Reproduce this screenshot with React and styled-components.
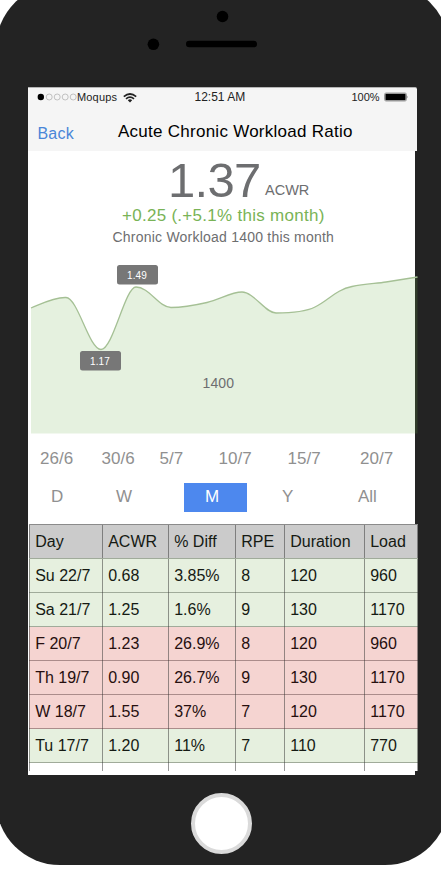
import React from "react";
import styled, { createGlobalStyle } from "styled-components";

const GlobalStyle = createGlobalStyle`
  * { box-sizing: border-box; }
  html, body { margin: 0; background: #fff; overflow: hidden; }
  body { font-family: "Liberation Sans", Arial, sans-serif; color: #6d6e70; }
`;

const Page = styled.div`
  width: 441px;
  height: 879px;
  overflow: hidden;
  background: #fff;
  display: flow-root;
`;

const Phone = styled.div`
  width: 453px;
  height: 881.5px;
  margin: -16.5px 0 0 -4px;
  border-radius: 64px;
  background: #232323;
  display: flex;
  flex-direction: column;
`;

const Bezel = styled.svg`
  display: block;
  flex: none;
  width: 453px;
  height: 103.5px;
`;

const Screen = styled.main`
  width: 387px;
  height: 688px;
  flex: none;
  margin-left: 32px;
  background: #fff;
  display: flex;
  flex-direction: column;
  align-items: flex-start;
`;

const Header = styled.header`
  width: 388.5px;
  height: 64px;
  flex: none;
  background: #f5f5f5;
  border-top: 1px solid #b5b5b5;
  border-top-right-radius: 2px;
  color: #000;
`;

const StatusBar = styled.div`
  height: 19px;
  display: grid;
  grid-template-columns: 166.5px 157px 1fr;
  align-items: center;
  line-height: 19px;
`;

const StatusGroup = styled.div`
  display: flex;
  align-items: center;
  height: 19px;
  font-size: ${(p) => p.$size}px;
  letter-spacing: ${(p) => p.$tracking || 0}px;
  color: #222;
`;

const Dots = styled.svg`
  width: 40px;
  height: 10px;
  margin: 0 0.5px 2px 8.5px;
`;

const Wifi = styled.svg`
  width: 14px;
  height: 10px;
  margin-left: 6px;
`;

const Battery = styled.svg`
  width: 24px;
  height: 10px;
  margin: 0 0 1px 4px;
`;

const NavBar = styled.nav`
  height: 44px;
  display: grid;
  grid-template-columns: 80.5px 1fr;
  padding: 3px 0 0 9.5px;
  line-height: 44px;
`;

const BackLink = styled.a`
  color: #4a86d8;
  font-size: 16px;
  letter-spacing: 0.2px;
  padding-top: 2px;
`;

const Title = styled.h1`
  margin: 0;
  font-size: 17px;
  font-weight: 400;
  letter-spacing: 0.26px;
  white-space: nowrap;
`;

const Summary = styled.section`
  height: 102px;
  flex: none;
  white-space: nowrap;
`;

const Ratio = styled.div`
  display: flex;
  height: 54px;
  padding: 3px 0 0 138.5px;
`;

const RatioValue = styled.span`
  font-size: 49px;
  line-height: 52px;
  letter-spacing: -0.7px;
  padding-left: 1.5px;
  width: 98.5px;
`;

const RatioUnit = styled.span`
  font-size: 14.5px;
  line-height: 24px;
  padding-top: 24px;
`;

const Change = styled.div`
  height: 22px;
  line-height: 22px;
  padding-left: 94px;
  font-size: 17px;
  letter-spacing: 0.28px;
  color: #79b356;
`;

const Workload = styled.div`
  height: 20px;
  line-height: 20px;
  padding-left: 84.5px;
  font-size: 14px;
  letter-spacing: 0.22px;
`;

const Chart = styled.svg`
  display: block;
  flex: none;
  width: 390px;
  height: 181px;
  font-family: "Liberation Sans", Arial, sans-serif;
`;

const AxisRow = styled.div`
  height: 22px;
  margin-top: 13px;
  flex: none;
  display: grid;
  grid-template-columns: 61.5px 58px 59px 69px 72.5px 50px;
  padding-left: 12px;
  line-height: 23px;
  font-size: 17px;
  color: #909090;
`;

const RangeTabs = styled.div`
  height: 29px;
  margin-top: 13.5px;
  flex: none;
  display: grid;
  grid-template-columns: 65px 67.5px 98.5px 76px 50px;
  padding-left: 23px;
  line-height: 27px;
  font-size: 17px;
  color: #909090;
`;

const RangeTab = styled.div`
  ${(p) =>
    p.$active &&
    `
    width: 63px;
    padding-left: 21.5px;
    background: #4d88ee;
    color: #fff;
  `}
`;

const TableClip = styled.div`
  width: 389px;
  height: 247px;
  margin: 12.5px 0 0 1px;
  flex: none;
  overflow: hidden;
`;

const Table = styled.div`
  border-top: 1px solid #8b8b8b;
  color: #151515;
  background: #fff;
`;

const tones = {
  head: "#cbcbcb",
  good: "#e6f0df",
  bad: "#f5d4d1",
  none: "#ffffff",
};

const Row = styled.div`
  display: grid;
  grid-template-columns: 74px 66px 67px 49px 80px 53px;
  height: 34px;
  line-height: ${(p) => (p.$tone === "head" ? 33 : 34)}px;
  background: ${(p) => tones[p.$tone]};
  border-bottom: 1px solid ${(p) => (p.$tone === "bad" ? "#ab8c8b" : "#a0ab9a")};
  color: ${(p) => (p.$tone === "bad" ? "#260f0f" : "#151a13")};
  font-size: 16px;
`;

const Cell = styled.div`
  padding-left: 5.2px;
  border-right: 1px solid rgba(50, 50, 50, 0.5);
  white-space: nowrap;

  &:first-child {
    border-left: 1px solid rgba(50, 50, 50, 0.5);
  }
`;

const HomeButton = styled.button`
  flex: none;
  width: 61px;
  height: 61px;
  margin: 18px 0 0 195px;
  padding: 0;
  border: 4px solid #dadada;
  border-radius: 50%;
  background: #fff;
`;

const dates = ["26/6", "30/6", "5/7", "10/7", "15/7", "20/7"];
const ranges = ["D", "W", "M", "Y", "All"];
const rows = [
  ["head", "Day", "ACWR", "% Diff", "RPE", "Duration", "Load"],
  ["good", "Su 22/7", "0.68", "3.85%", "8", "120", "960"],
  ["good", "Sa 21/7", "1.25", "1.6%", "9", "130", "1170"],
  ["bad", "F 20/7", "1.23", "26.9%", "8", "120", "960"],
  ["bad", "Th 19/7", "0.90", "26.7%", "9", "130", "1170"],
  ["bad", "W 18/7", "1.55", "37%", "7", "120", "1170"],
  ["good", "Tu 17/7", "1.20", "11%", "7", "110", "770"],
  ["none", "", "", "", "", "", ""],
];

const line =
  "M3 55 C13 51 26 44 38 44.5 C50 45 61 96.5 73 96.5 C85 96.5 97 34 108 34 C121 34 131 54.5 143 54.5 C155 54.5 168 52 179 49.5 C191 47 203 39 214 39 C226 39 237 60 248 60 C262 60 278 58.5 287 54 C300 48 308 36.5 324 33.5 C336 31 348 30.5 358 29 L389.5 24";

function Callout({ x, y, label }) {
  return (
    <g>
      <rect x={x} y={y} width="41" height="19.5" rx="2.5" fill="#777777" />
      <text x={x + 20} y={y + 13.5} fontSize="10" letterSpacing="0.1" textAnchor="middle" fill="#fff">
        {label}
      </text>
    </g>
  );
}

export default function App() {
  return (
    <Page>
      <GlobalStyle />
      <Phone>
        <Bezel viewBox="0 0 453 103.5">
          <circle cx="226.5" cy="32.5" r="5.8" fill="#000" />
          <circle cx="157.4" cy="60.3" r="5.8" fill="#000" />
          <rect x="190" y="56.7" width="71" height="6.6" rx="3.3" fill="#000" />
        </Bezel>
        <Screen>
          <Header>
            <StatusBar>
              <StatusGroup $size={11} $tracking={0.17}>
                <Dots viewBox="0 0 40 10">
                  <circle cx="3.8" cy="5" r="3.2" fill="#000" />
                  {[12.2, 20.2, 28.2, 36.2].map((x) => (
                    <circle key={x} cx={x} cy="5" r="3" fill="none" stroke="#aaa" strokeWidth="0.7" />
                  ))}
                </Dots>
                Moqups
                <Wifi viewBox="0 0 14 10">
                  <g fill="none" stroke="#222" strokeWidth="1.7">
                    <path d="M0.8 3.6 Q7 -1.6 13.2 3.6" />
                    <path d="M3 5.9 Q7 2.5 11 5.9" />
                  </g>
                  <path d="M4.8 7.2 Q7 5.4 9.2 7.2 L7 9.6 Z" fill="#222" />
                </Wifi>
              </StatusGroup>
              <StatusGroup $size={12}>12:51 AM</StatusGroup>
              <StatusGroup $size={11}>
                100%
                <Battery viewBox="0 0 24 10">
                  <rect x="0.5" y="1" width="22" height="8" rx="1.6" fill="none" stroke="#777" strokeWidth="0.7" />
                  <rect x="1.4" y="1.8" width="20.2" height="6.4" rx="0.8" fill="#000" />
                  <path d="M22.9 3.5 Q24 5 22.9 6.5 Z" fill="#333" />
                </Battery>
              </StatusGroup>
            </StatusBar>
            <NavBar>
              <BackLink>Back</BackLink>
              <Title>Acute Chronic Workload Ratio</Title>
            </NavBar>
          </Header>
          <Summary>
            <Ratio>
              <RatioValue>1.37</RatioValue>
              <RatioUnit>ACWR</RatioUnit>
            </Ratio>
            <Change>+0.25 (.+5.1% this month)</Change>
            <Workload>Chronic Workload 1400 this month</Workload>
          </Summary>
          <Chart viewBox="0 0 390 181">
            <path d={`${line} V180.5 H3 Z`} fill="rgba(112, 175, 75, 0.18)" />
            <path d={line} fill="none" stroke="#a5c095" strokeWidth="1.3" />
            <Callout x={89} y={12} label="1.49" />
            <Callout x={52} y={98} label="1.17" />
            <text x="174.5" y="135.4" fontSize="14" letterSpacing="0.1" fill="#6d6e70">1400</text>
          </Chart>
          <AxisRow>
            {dates.map((d) => (
              <span key={d}>{d}</span>
            ))}
          </AxisRow>
          <RangeTabs>
            {ranges.map((r) => (
              <RangeTab key={r} $active={r === "M"}>{r}</RangeTab>
            ))}
          </RangeTabs>
          <TableClip>
            <Table>
              {rows.map(([tone, ...cells], i) => (
                <Row key={i} $tone={tone}>
                  {cells.map((c, j) => (
                    <Cell key={j}>{c}</Cell>
                  ))}
                </Row>
              ))}
            </Table>
          </TableClip>
        </Screen>
        <HomeButton aria-label="Home" />
      </Phone>
    </Page>
  );
}
